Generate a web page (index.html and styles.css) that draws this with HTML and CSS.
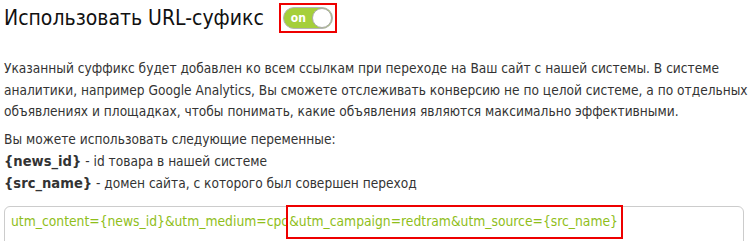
FILE: index.html
```html
<!DOCTYPE html>
<html lang="ru">
<head>
    <meta charset="UTF-8">
    <title>URL-суфикс</title>
    <link rel="stylesheet" href="styles.css">
</head>
<body>
<div class="suffix">
    <div class="suffix-head">
        <h2>Использовать URL-суфикс</h2>
        <div class="mark">
            <label class="switch">
                <span class="switch-label">on</span>
                <span class="switch-knob"></span>
            </label>
        </div>
    </div>

    <p class="descr">Указанный суффикс будет добавлен ко всем ссылкам при переходе на Ваш сайт с нашей системы. В системе аналитики, например Google Analytics, Вы сможете отслеживать конверсию не по целой системе, а по отдельных объявлениях и площадках, чтобы понимать, какие объявления являются максимально эффективными.</p>

    <p class="vars">
        Вы можете использовать следующие переменные:<br>
        <b>{news_id}</b> - id товара в нашей системе<br>
        <b>{src_name}</b> - домен сайта, с которого был совершен переход
    </p>

    <div class="suffix-box">
        utm_content={news_id}&amp;utm_medium=cpc<span class="mark-inline">&amp;utm_campaign=redtram&amp;utm_source={src_name}</span>
    </div>
</div>
</body>
</html>
```

FILE: styles.css
```css
body {
    margin: 0;
    padding: 0 2px 0 4px;
    font-family: "DejaVu Sans Condensed", "DejaVu Sans", sans-serif;
    color: #333;
    background: #fff;
}

.suffix-head {
    display: flex;
    align-items: center;
    height: 35px;
}

.suffix-head h2 {
    margin: 0;
    font-size: 21px;
    font-weight: normal;
    color: #111;
}

.mark {
    margin-left: 15px;
    padding: 2px;
    border: 2px solid #e00;
    display: flex;
}

.switch {
    width: 50px;
    height: 22px;
    box-sizing: border-box;
    border-radius: 11px;
    background: #a5cf3a;
    border: 1px solid #b5b5b5;
    display: flex;
    align-items: center;
    justify-content: space-between;
}

.switch-label {
    color: #fff;
    font-weight: bold;
    font-size: 12px;
    padding-left: 7px;
}

.switch-knob {
    width: 20px;
    height: 20px;
    box-sizing: border-box;
    border-radius: 50%;
    background: #fff;
    border: 1px solid #aaa;
}

.descr {
    margin: 23px 0 0;
    font-size: 13.6px;
    line-height: 21.5px;
}

.vars {
    margin: 6px 0 0;
    font-size: 13.6px;
    line-height: 21px;
}

.vars b {
    font-size: 14.6px;
}

.suffix-box {
    margin-top: 12px;
    margin-right: 6px;
    height: 40px;
    border: 1px solid #ccc;
    border-radius: 6px;
    padding: 6px 6px 0;
    font-size: 13.75px;
    color: #8fbe1a;
}

.mark-inline {
    outline: 2px solid #e00;
    padding: 6px 3px 8px 1px;
}
```
